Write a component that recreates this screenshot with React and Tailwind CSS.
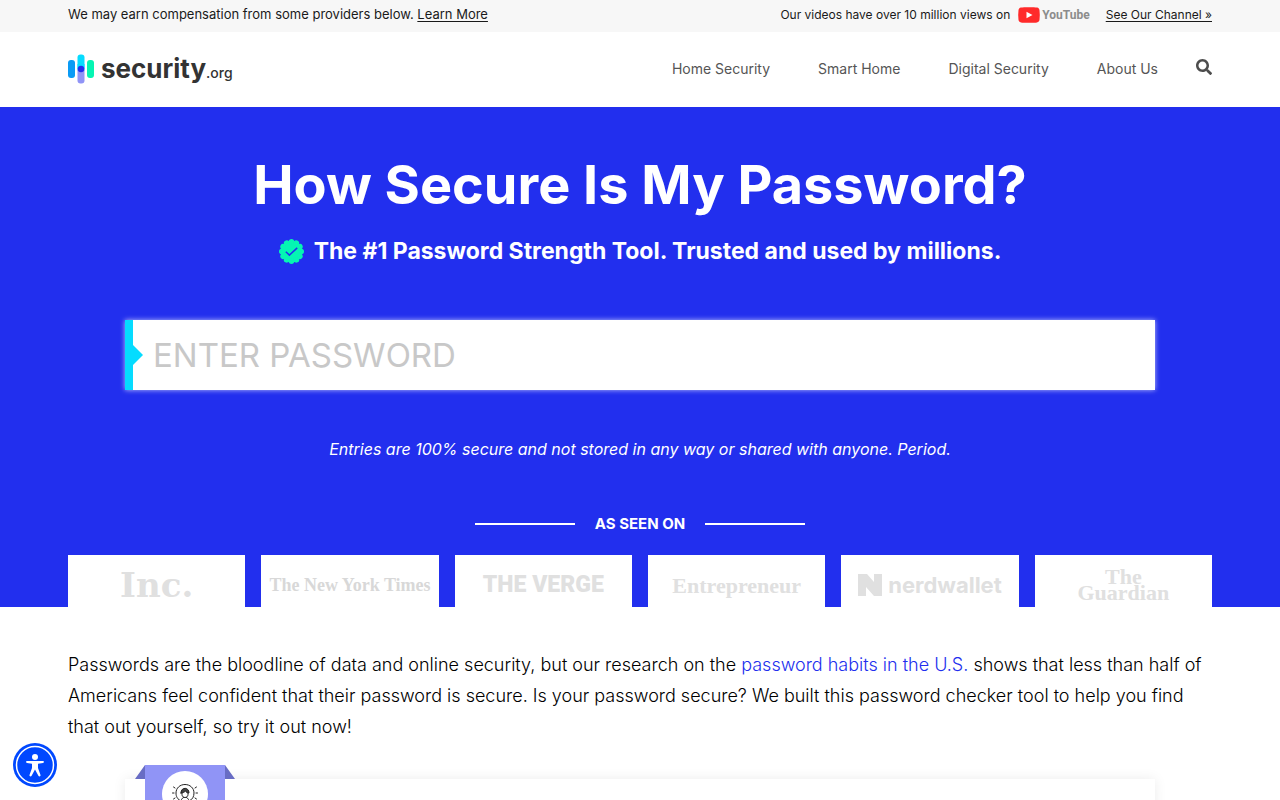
import React from 'react';

const navigation = [
  { name: 'Home Security', href: '#home-security' },
  { name: 'Smart Home', href: '#smart-home' },
  { name: 'Digital Security', href: '#digital-security' },
  { name: 'About Us', href: '#about' },
];

const SecurityLogo = () => (
  <a href="#home" className="flex items-center gap-1.5 text-[#333333]" aria-label="security.org">
    <svg width="27" height="30" viewBox="0 0 27 30" aria-hidden="true">
      <rect x="0" y="6" width="7" height="18" rx="3" fill="#0a9bf5" />
      <rect x="9.5" y="0.5" width="7" height="18" rx="3" fill="#05dcff" />
      <rect x="9.5" y="12" width="7" height="17.5" rx="3" fill="#9094f6" />
      <rect x="9.5" y="10" width="7" height="5" fill="#05dcff" />
      <circle cx="13" cy="15" r="3.2" fill="#222fee" />
      <rect x="19" y="6" width="7" height="18" rx="3" fill="#05f5b3" />
    </svg>
    <span className="flex items-baseline leading-7">
      <span className="text-[26px] font-bold">security</span>
      <span className="text-sm font-medium">.org</span>
    </span>
  </a>
);

const YouTubeLogo = () => (
  <span className="flex items-center gap-0.5">
    <svg width="22" height="16" viewBox="0 0 22 16" aria-hidden="true">
      <path d="M3 .6C5.5.1 16.5.1 19 .6c1.6.3 2.3 1.2 2.5 2.7.4 3.2.4 6.2 0 9.4-.2 1.5-.9 2.4-2.5 2.7-2.5.5-13.5.5-16 0C1.4 15.1.7 14.2.5 12.7.1 9.500.1 6.500.5 3.300.7 1.800 1.400.9 3 .6Z" fill="#ff2a2a" />
      <path d="m8.5 4.800 6 3.200-6 3.200Z" fill="#fff" />
    </svg>
    <span className="font-[Roboto,sans-serif] text-xs font-bold leading-4 text-[#8c8c8c]">YouTube</span>
  </span>
);

const pressLogos = [
  {
    name: 'inc',
    logo: <span className="font-['DejaVu_Serif',serif] text-[34px] font-bold text-[#e0e0e0]">Inc.</span>,
  },
  {
    name: 'nyt',
    logo: <span className="font-['Liberation_Serif',serif] text-lg font-bold text-[#d8d8d8]">The New York Times</span>,
  },
  {
    name: 'verge',
    logo: <span className="font-[Roboto,sans-serif] text-[23px] font-black text-[#e0e0e0]">THE VERGE</span>,
  },
  {
    name: 'entrepreneur',
    logo: <span className="font-['Liberation_Serif',serif] text-[22px] font-bold text-[#e0e0e0]">Entrepreneur</span>,
  },
  {
    name: 'nerdwallet',
    logo: (
      <span className="flex items-center gap-1.5 text-[#e0e0e0]">
        <svg width="24" height="24" viewBox="0 0 24 24" fill="currentColor" aria-hidden="true">
          <path d="M0 1h9l7 8V1h8v22h-8L8 14v9H0Z" />
        </svg>
        <span className="text-[22px] font-bold">nerdwallet</span>
      </span>
    ),
  },
  {
    name: 'guardian',
    logo: (
      <span className="flex flex-col items-center font-['Liberation_Serif',serif] text-[22px] font-bold leading-4 text-[#e0e0e0]">
        <span>The</span>
        <span>Guardian</span>
      </span>
    ),
  },
];

const TopBar = () => (
  <div className="bg-[#f7f7f7]">
    <div className="flex h-8 items-center justify-between px-[68px] pb-0.5 text-[13px] text-[#1a1a1a]">
      <p>
        We may earn compensation from some providers below.{' '}
        <a href="#disclosure" className="underline underline-offset-2">Learn More</a>
      </p>
      <div className="flex items-center text-xs">
        <span className="mr-2">Our videos have over 10 million views on</span>
        <YouTubeLogo />
        <a href="#channel" className="ml-4 underline underline-offset-2">See Our Channel »</a>
      </div>
    </div>
  </div>
);

const Header = () => (
  <header className="flex h-[75px] items-center justify-between bg-white px-[68px] pb-0.5">
    <SecurityLogo />
    <div className="flex items-center gap-[38px]">
      <nav className="flex gap-12">
        {navigation.map((item) => (
          <a key={item.name} href={item.href} className="text-sm text-[#555555]">
            {item.name}
          </a>
        ))}
      </nav>
      <button type="button" aria-label="Search" className="pb-1 text-[#4d4d4d]">
        <svg width="16" height="16" viewBox="0 0 512 512" fill="currentColor" aria-hidden="true">
          <path d="M505 442.700 405.300 343c-4.500-4.500-10.600-7-17-7H372c27.600-35.300 44-79.700 44-128C416 93.100 322.900 0 208 0S0 93.100 0 208s93.100 208 208 208c48.300 0 92.700-16.400 128-44v16.300c0 6.400 2.500 12.500 7 17l99.700 99.700c9.400 9.400 24.600 9.400 33.900 0l28.300-28.300c9.400-9.400 9.400-24.600.1-34ZM208 336c-70.700 0-128-57.200-128-128 0-70.700 57.200-128 128-128 70.700 0 128 57.200 128 128 0 70.700-57.200 128-128 128Z" />
        </svg>
      </button>
    </div>
  </header>
);

const scallops = [0, 30, 60, 90, 120, 150, 180, 210, 240, 270, 300, 330];

const VerifiedBadge = () => (
  <svg width="25" height="25" viewBox="0 0 24 24" fill="#05f5b3" aria-hidden="true">
    <circle cx="12" cy="12" r="10.6" />
    {scallops.map((angle) => (
      <circle key={angle} cx="12" cy="2.6" r="2.6" transform={`rotate(${angle} 12 12)`} />
    ))}
    <path d="m6.500 12.200 3.500 3.300 7.500-7" fill="none" stroke="#222fee" strokeWidth="1.400" />
  </svg>
);

const Hero = () => (
  <section className="bg-[#222fee] px-[68px] text-white">
    <h1 className="pt-12 text-center text-[54px] font-bold leading-[60px]">How Secure Is My Password?</h1>
    <div className="mt-5 flex items-center justify-center gap-2.5">
      <VerifiedBadge />
      <p className="text-[23px] font-bold leading-8">The #1 Password Strength Tool. Trusted and used by millions.</p>
    </div>

    <div className="relative mx-[57px] mt-[53px]">
      <input
        type="text"
        aria-label="Enter password"
        placeholder="ENTER PASSWORD"
        className="block h-[70px] w-full border-l-8 border-[#05dcff] bg-white pl-5 text-[33px] text-black shadow-[0_0_5px_rgba(255,255,255,0.7)] outline-none placeholder:text-[#c8c8c8]"
      />
      <svg className="absolute left-2 top-[25px]" width="10" height="20" viewBox="0 0 10 20" aria-hidden="true">
        <path d="M0 0 10 10 0 20Z" fill="#05dcff" />
      </svg>
    </div>

    <p className="mt-[47px] text-center text-base italic leading-6">
      Entries are 100% secure and not stored in any way or shared with anyone. Period.
    </p>

    <div className="mt-[51px] flex items-center justify-center gap-5">
      <span className="h-0.5 w-[100px] bg-white" />
      <h2 className="text-[15px] font-bold leading-6">AS SEEN ON</h2>
      <span className="h-0.5 w-[100px] bg-white" />
    </div>

    <ul className="mt-[19px] grid grid-cols-6 gap-4">
      {pressLogos.map((item) => (
        <li key={item.name} className="flex h-[52px] items-center justify-center whitespace-nowrap bg-white pt-2">
          {item.logo}
        </li>
      ))}
    </ul>
  </section>
);

const IdeaIcon = () => (
  <svg width="26" height="30" viewBox="0 0 26 30" fill="none" stroke="#222" strokeWidth="1" strokeLinecap="round" aria-hidden="true">
    <path d="M9 18c-3.500-1.500-5-4.500-5-8 0-5 4-8.500 9-8.500s9 3.500 9 8.500c0 3.500-1.500 6.500-5 8v8H9Z" />
    <path d="M10 9v2.500c0 4 6 4 6 0V9" />
    <path d="M9 10c-.5-6 8-6.500 8 0-2 0-3-1-3.500-2C12.500 9 11 10 9 10Z" fill="#444" />
    <path d="M11.500 14.500C9.500 15.500 9 17 9 19M14.500 14.500c2 1 2.500 2.500 2.500 4.500" />
    <path d="M.5 10h1.500M24 10h1.500M1.500 4l1.500 1M24.500 4 23 5M1.500 16 3 15M24.500 16 23 15" />
  </svg>
);

const TipsCard = () => (
  <section className="relative mx-[57px] mt-[37px] h-60 bg-white shadow-[0_0_12px_rgba(0,0,0,0.08)]">
    {/* Ribbon folded over the card's top edge */}
    <svg className="absolute -top-3.5 left-2.5" width="100" height="14" viewBox="0 0 100 14" aria-hidden="true">
      <path d="M10 0v14H0ZM90 0v14h10Z" fill="#686cc4" />
    </svg>
    <div className="absolute -top-3.5 left-5 flex h-28 w-20 justify-center bg-[#9094f6] pt-1.5">
      <div className="flex h-[46px] w-[46px] items-center justify-center rounded-full bg-white pt-2">
        <IdeaIcon />
      </div>
    </div>
  </section>
);

const AccessibilityButton = () => (
  <button
    type="button"
    aria-label="Accessibility"
    className="fixed bottom-[13px] left-[13px] h-11 w-11 rounded-full bg-[#0048ff]"
  >
    <svg width="44" height="44" viewBox="0 0 44 44" fill="#fff" aria-hidden="true">
      <circle cx="22" cy="22" r="18.5" fill="none" stroke="#fff" strokeWidth="1.5" />
      <circle cx="22" cy="14" r="3" />
      <path d="M14 18h16c1.300 0 1.300 1.800 0 2l-5 .8v4.200l2.500 7c.4 1.400-1.500 2-2.100.8L22 26.500l-3.400 6.300c-.6 1.200-2.500.6-2.100-.8l2.500-7v-4.200L14 20c-1.300-.2-1.300-2 0-2Z" />
    </svg>
  </button>
);

function App() {
  return (
    <div className="h-screen overflow-hidden bg-white font-[Inter,sans-serif]">
      <TopBar />
      <Header />
      <Hero />
      <main className="px-[68px] pt-[42px]">
        <p className="text-lg font-[340] leading-[31px] text-black">
          Passwords are the bloodline of data and online security, but our research on the{' '}
          <a href="#password-habits" className="text-[#222fee]">password habits in the U.S.</a>{' '}
          shows that less than half of Americans feel confident that their password is secure. Is your password secure?
          We built this password checker tool to help you find that out yourself, so try it out now!
        </p>
        <TipsCard />
      </main>
      <AccessibilityButton />
    </div>
  );
}

export default App;
